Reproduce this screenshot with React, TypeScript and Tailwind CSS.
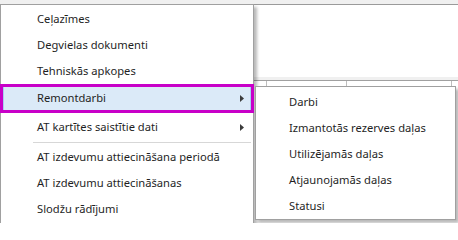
const mainItems: { label: string; h: number; sub?: boolean; active?: boolean; sepAfter?: boolean }[] = [
  { label: 'Ceļazīmes', h: 26 },
  { label: 'Degvielas dokumenti', h: 26 },
  { label: 'Tehniskās apkopes', h: 26 },
  { label: 'Remontdarbi', h: 29, sub: true, active: true },
  { label: 'AT kartītes saistītie dati', h: 28, sub: true, sepAfter: true },
  { label: 'AT izdevumu attiecināšana periodā', h: 26 },
  { label: 'AT izdevumu attiecināšanas', h: 26 },
  { label: 'Slodžu rādījumi', h: 26 },
];

const subItems = ['Darbi', 'Izmantotās rezerves daļas', 'Utilizējamās daļas', 'Atjaunojamās daļas', 'Statusi'];

function Arrow() {
  return (
    <svg width="4" height="7" viewBox="0 0 4 7" className="absolute right-[9px]">
      <path d="M0 0 L4 3.5 L0 7 Z" fill="#3c3c3c" />
    </svg>
  );
}

export default function App() {
  return (
    <div
      className="relative h-[223px] w-[458px] overflow-hidden bg-[#f0f0f0] text-[11.2px] text-[#1f1f1f]"
      style={{ fontFamily: '"Noto Sans", "Open Sans", sans-serif' }}
    >
      {/* window behind the menus */}
      <div className="absolute left-[253px] top-[4px] h-[219px] w-[205px] border-t border-[#9a9a9a] bg-white">
        <div className="mt-[72px] h-[3px] bg-[#f0f0f0]" />
        <div className="flex h-[6px] border-t border-[#a0a0a0]">
          <div className="w-[14px] border-r border-[#bdbdbd]" />
          <div className="w-[80px] border-r border-[#bdbdbd]" />
          <div className="w-[105px] border-r border-[#bdbdbd]" />
        </div>
      </div>

      {/* main context menu */}
      <div className="absolute left-0 top-[4px] flex w-[254px] flex-col border border-[#a0a0a0] bg-white pt-[1px] shadow-[3px_3px_3px_rgba(0,0,0,0.28)]">
        {mainItems.map((it) => (
          <div key={it.label}>
            <div
              className="relative flex items-center pl-[36px]"
              style={{ height: it.h }}
            >
              {it.active && (
                <div className="absolute inset-x-[2px] inset-y-[2px] border border-[#a6cff2] bg-[#dbeaf8]" />
              )}
              <span className="relative whitespace-nowrap">{it.label}</span>
              {it.sub && <Arrow />}
              {it.active && (
                <div className="absolute -left-px -right-px inset-y-0 border-[3px] border-[#c800c8]" />
              )}
            </div>
            {it.sepAfter && <div className="mx-[32px] my-[1px] mr-[2px] h-px bg-[#d7d7d7]" />}
          </div>
        ))}
        <div className="h-[6px]" />
      </div>

      {/* submenu */}
      <div className="absolute left-[255px] top-[86px] flex w-[201px] flex-col border border-[#a0a0a0] bg-white pt-[2px] shadow-[3px_3px_3px_rgba(0,0,0,0.28)]">
        {subItems.map((s) => (
          <div key={s} className="flex h-[26px] items-center pl-[33px] whitespace-nowrap">
            {s}
          </div>
        ))}
      </div>
    </div>
  );
}
